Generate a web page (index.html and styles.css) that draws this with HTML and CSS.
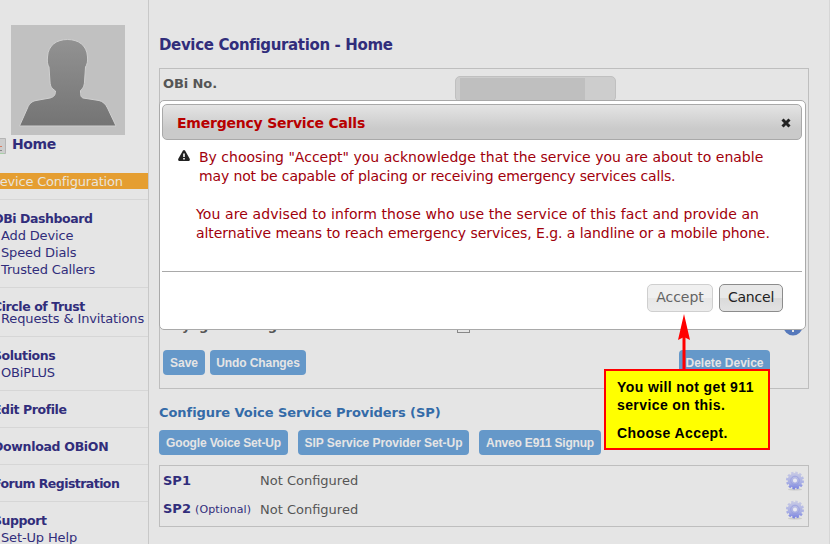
FILE: index.html
```html
<!DOCTYPE html>
<html lang="en">
<head>
  <meta charset="UTF-8" />
  <meta name="viewport" content="width=device-width, initial-scale=1.0"/>
  <title>Device Configuration - Home</title>
  <link rel="stylesheet" href="styles.css">
</head>

<body>
  <div class="page">
    <div class="sidebar">
      <svg class="avatar" width="114" height="110" viewBox="0 0 114 110">
        <defs>
          <linearGradient id="person" x1="0" y1="0" x2="0" y2="1">
            <stop offset="0" stop-color="#929292"/>
            <stop offset="1" stop-color="#747474"/>
          </linearGradient>
        </defs>
        <rect width="114" height="110" fill="#c1c1c1"/>
        <path d="M8.500 101L16.500 83C18.500 78 21 76.500 25 75.500L39 73C43 72 44.500 70 44.500 66C40.500 63 39.500 62 39 57L38 42C36.500 40 36 36 36.500 32C37 20 46 14.500 56.500 14.500C67 14.500 76 20 76.500 32C77 36 76 40 74.500 42L73.500 57C73 62 72 63 69.500 65.500C69.500 70 69.500 72 72 73L88 75.500C92 76.500 94.500 79 96.500 83L105 101Z" fill="url(#person)" stroke="#d0d0d0" stroke-width="1"/>
      </svg>
      <div class="home">
        <svg width="6" height="16" viewBox="0 0 6 16">
          <path d="M0 .5H5.500V15.500H0" fill="#cdcdcd" stroke="#b5b5b5"/>
          <path d="M0 8.500H2" stroke="#d87a60"/>
          <path d="M0 12.500H2" stroke="#888"/>
          <path d="M0 15.500H4" stroke="#a8d0a8"/>
        </svg>
        <span>Home</span>
      </div>
      <div class="current"><span>Device Configuration</span></div>
      <div class="menu">
        <div class="section">
          <h4>OBi Dashboard</h4>
          <a>Add Device</a>
          <a>Speed Dials</a>
          <a>Trusted Callers</a>
        </div>
        <div class="section circle">
          <h4>Circle of Trust</h4>
          <a>Requests &amp; Invitations</a>
        </div>
        <div class="section">
          <h4>Solutions</h4>
          <a>OBiPLUS</a>
        </div>
        <div class="section"><h4>Edit Profile</h4></div>
        <div class="section"><h4 class="download">Download OBiON</h4></div>
        <div class="section"><h4 class="forum">Forum Registration</h4></div>
        <div class="section">
          <h4>Support</h4>
          <a>Set-Up Help</a>
        </div>
      </div>
    </div>

    <div class="main">
      <h2>Device Configuration - Home</h2>
      <div class="panel device">
        <div class="field">
          <label>OBi No.</label>
          <div class="number"><div class="mask"></div></div>
        </div>
        <div class="field dst">
          <label>Daylight Saving Time</label>
          <div class="check"></div>
          <svg class="help" width="20" height="20" viewBox="0 0 20 20">
            <circle cx="10" cy="10" r="9.500" fill="#5578bb"/>
            <path d="M7 7.500a3 3 0 1 1 4.500 2.500q-1.500 1-1.500 2.500M10 14v2" fill="none" stroke="#e5e5e5" stroke-width="2"/>
          </svg>
        </div>
        <div class="actions">
          <button class="btn save">Save</button>
          <button class="btn undo">Undo Changes</button>
          <button class="btn delete">Delete Device</button>
        </div>
      </div>

      <h3>Configure Voice Service Providers (SP)</h3>
      <div class="setup">
        <button class="btn google">Google Voice Set-Up</button>
        <button class="btn sip">SIP Service Provider Set-Up</button>
        <button class="btn anveo">Anveo E911 Signup</button>
      </div>
      <div class="panel providers">
        <div class="sp">
          <div class="name"><b>SP1</b></div>
          <span>Not Configured</span>
          <svg class="gear" width="20" height="20" viewBox="0 0 20 20"><use href="#gear"/></svg>
        </div>
        <div class="sp">
          <div class="name"><b>SP2</b> <small>(Optional)</small></div>
          <span>Not Configured</span>
          <svg class="gear" width="20" height="20" viewBox="0 0 20 20"><use href="#gear"/></svg>
        </div>
      </div>
    </div>

    <div class="dialog">
      <div class="dialog-title">
        <span>Emergency Service Calls</span>
        <svg width="10" height="10" viewBox="0 0 10 10">
          <path d="M1.500 1.500L8.500 8.500M8.500 1.500L1.500 8.500" stroke="#222" stroke-width="3"/>
        </svg>
      </div>
      <div class="dialog-body">
        <svg class="warn" width="12" height="11" viewBox="0 0 12 11">
          <path d="M5 .5Q6 -.5 7 .5L11.800 9Q12 11 11 11H1Q0 11 .2 9Z" fill="#222"/>
          <path d="M6 3.500V7M6 8V9.500" stroke="#fff" stroke-width="1.600"/>
        </svg>
        <div class="message">
          <p>By choosing "Accept" you acknowledge that the service you are about to enable</p>
          <p class="l2">may not be capable of placing or receiving emergency services calls.</p>
          <p class="l3">You are advised to inform those who use the service of this fact and provide an</p>
          <p class="l4">alternative means to reach emergency services, E.g. a landline or a mobile phone.</p>
        </div>
      </div>
      <div class="dialog-buttons">
        <button class="accept">Accept</button>
        <button class="cancel">Cancel</button>
      </div>
    </div>

    <svg class="arrow" width="14" height="57" viewBox="0 0 14 57">
      <path d="M7 20V57" stroke="#f00" stroke-width="3"/>
      <path d="M7 1L13 27L7 24L1 27Z" fill="#f00"/>
    </svg>
    <div class="note">
      <p>You will not get 911<br>service on this.</p>
      <p>Choose Accept.</p>
    </div>
  </div>

  <svg width="0" height="0" class="defs">
    <defs>
      <linearGradient id="gearFill" gradientUnits="userSpaceOnUse" x1="0" y1="1" x2="0" y2="19">
        <stop offset="0" stop-color="#c9cbe4"/>
        <stop offset=".6" stop-color="#a9afe4"/>
        <stop offset="1" stop-color="#6f79e0"/>
      </linearGradient>
      <g id="gear">
        <ellipse cx="10" cy="18.500" rx="7" ry="1" fill="#ccc"/>
        <circle cx="10" cy="9.500" r="7.800" fill="none" stroke="url(#gearFill)" stroke-width="2.400" stroke-dasharray="2.400 1.684"/>
        <circle cx="10" cy="9.500" r="4.700" fill="none" stroke="url(#gearFill)" stroke-width="5.400"/>
        <circle cx="10" cy="9.500" r="4.300" fill="none" stroke="#9299dc" stroke-width=".7"/>
        <circle cx="10" cy="9.500" r="1.700" fill="#e8e8f3"/>
      </g>
    </defs>
  </svg>
</body>
</html>
```
FILE: styles.css
```css
/* Reset and base */
* { margin:0; padding:0; box-sizing:border-box; }
body {
  background:#e5e5e5; color:#555; overflow:hidden;
  font-family:Verdana, 'DejaVu Sans', sans-serif; font-size:13px;
}
svg { display:block; flex:none; }
.defs { position:absolute; }
.page {
  position:relative; display:flex;
  width:830px; height:544px; overflow:hidden;
  border-right:1px solid #d6d6d6;
}

/* Sidebar */
.sidebar {
  width:149px; flex:none; border-right:1px solid #c8c8c8;
  color:#312d7b; white-space:nowrap; overflow:hidden;
}
.avatar { margin:25px 0 0 11px; }
.home {
  display:flex; gap:6px; height:38px; padding-top:3px;
  font-size:14px; font-weight:bold; line-height:12px; letter-spacing:-.4px;
}
.current {
  height:16px; background:#e59e31; color:#e9e4dc; line-height:17px;
  letter-spacing:-.2px;
}
.current span { margin-left:-10px; }
.menu { margin-top:10px; }
.section {
  border-top:1px solid #d6d6d6; padding:10px 0 9px 1px;
}
.section h4 { font-size:12.5px; line-height:17px; margin-left:-8px; letter-spacing:-.42px; }
.section .download { letter-spacing:-.3px; }
.section .forum { letter-spacing:-.55px; }
.section a { display:block; line-height:17px; letter-spacing:-.14px; }
.circle a { line-height:8px; padding-bottom:4px; }

/* Main column */
.main { width:660px; padding:36px 0 0 10px; }
h2 { font-size:15px; line-height:18px; color:#312d7b; white-space:nowrap; letter-spacing:-.35px; }
h3 { font-size:13px; line-height:18px; color:#346ba8; margin-top:15px; letter-spacing:-.06px; }
.panel { border:1px solid #bebebe; }
.device {
  width:650px; height:321px; margin-top:14px; padding:7px 3px 13px;
  display:flex; flex-direction:column;
}
.field { display:flex; font-weight:bold; line-height:16px; letter-spacing:-.1px; }
.field label { width:292px; }
.number {
  width:161px; height:26px; padding:1px 4px;
  background:#cdcdcd; border:1px solid #c0c0c0; border-radius:5px;
}
.mask { width:125px; height:22px; background:#bfbfbf; }
.dst { margin-top:auto; height:20px; margin-bottom:14px; align-items:center; }
.check { width:13px; height:13px; margin-left:2px; border:1px solid #888; }
.help { margin-left:auto; margin-right:2px; }
.actions { display:flex; gap:5px; }
.btn {
  height:25px; border:none; border-radius:4px;
  background:#6598c9; color:#e5e5e5; white-space:nowrap;
  font:bold 12px Arial, 'Liberation Sans', sans-serif;
}
.save { width:42px; }
.undo { width:96px; letter-spacing:-.1px; }
.delete { width:91px; margin-left:auto; margin-right:35px; }
.setup { display:flex; gap:10px; margin-top:8px; }
.google { width:129px; letter-spacing:-.15px; }
.sip { width:171px; letter-spacing:-.05px; }
.anveo { width:122px; letter-spacing:-.2px; }
.providers { width:650px; height:62px; margin-top:10px; padding:1px 3px; }
.sp { display:flex; align-items:center; height:28px; line-height:16px; padding-bottom:1px; }
.sp + .sp { height:29px; padding-bottom:0; }
.sp .name { width:97px; color:#312d7b; white-space:nowrap; }
.sp small { font-size:11px; letter-spacing:.1px; }
.gear { margin-left:auto; }

/* Dialog over the page */
.dialog {
  position:absolute; left:159px; top:100px; width:647px; height:230px;
  background:#fff; border:1px solid #a9a9a9; border-radius:5px;
  padding:3px 3px 3px 2px;
}
.dialog-title {
  display:flex; align-items:center; justify-content:space-between;
  height:36px; padding:1px 10px 0 14px;
  border:1px solid #a9a9a9; border-radius:5px;
  background:linear-gradient(#e4e4e4, #cacaca 70%);
  color:#b80000; font-size:14px; font-weight:bold; letter-spacing:-.22px;
}
.dialog-body {
  display:flex; height:132px; padding:10px 0 0 16px;
  border-bottom:1px solid #a9a9a9;
}
.warn { margin-right:9px; }
.message { margin-top:-2px; color:#a1000b; font-size:14px; line-height:19px; white-space:nowrap; }
.message .l2 { letter-spacing:-.13px; }
.message .l3 { margin:19px 0 0 -3px; letter-spacing:.1px; }
.message .l4 { margin-left:-3px; letter-spacing:-.07px; }
.dialog-buttons {
  display:flex; justify-content:flex-end; gap:6px; padding:12px 19px 0 0;
}
.dialog-buttons button {
  height:28px; padding-bottom:2px; border:1px solid #8c8c8c; border-radius:5px;
  background:linear-gradient(#e8e8e8 50%, #dadada 50%, #e2e2e2);
  color:#222; font:14px Verdana, 'DejaVu Sans', sans-serif; letter-spacing:-.2px;
}
.dialog-buttons .accept {
  width:66px; border-color:#cfcfcf; color:#646464; letter-spacing:0;
  background:linear-gradient(#f0f0f0 50%, #e7e7e7 50%, #ececec);
}
.dialog-buttons .cancel { width:64px; }

/* Callout */
.arrow { position:absolute; left:677px; top:313px; }
.note {
  position:absolute; left:604px; top:369px; width:166px; height:81px;
  padding:7px 0 0 11px; border:2px solid #f00; background:#ff0; color:#000;
  font:bold 14px/18px Arial, 'Liberation Sans', sans-serif; white-space:nowrap;
  letter-spacing:.4px;
}
.note p + p { margin-top:10px; }
```
